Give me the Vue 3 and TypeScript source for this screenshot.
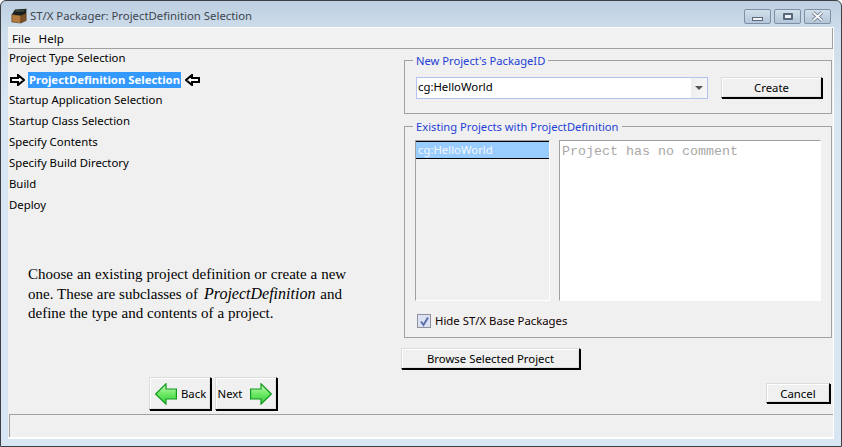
<script setup lang="ts">
const steps: { label: string; active?: boolean }[] = [
  { label: 'Project Type Selection' },
  { label: 'ProjectDefinition Selection', active: true },
  { label: 'Startup Application Selection' },
  { label: 'Startup Class Selection' },
  { label: 'Specify Contents' },
  { label: 'Specify Build Directory' },
  { label: 'Build' },
  { label: 'Deploy' },
]
</script>

<template>
  <div class="window">
    <header class="titlebar">
      <svg class="app-icon" width="16" height="16" viewBox="0 0 16 16">
        <path d="M.8 6.5 L10 7.5 L10 15 L.8 14 Z" fill="#b37a40" stroke="#5a3a18" stroke-width=".6" />
        <path d="M10 7.5 L15.2 5.5 L15.2 12.5 L10 15 Z" fill="#7d5026" stroke="#5a3a18" stroke-width=".6" />
        <path d="M.8 6.5 L4 1.5 L15.5 .8 L15.2 5.5 L10 7.5 Z" fill="#1d1f1c" />
        <path d="M4.5 2.2 L14 1.5 L13 3.5 L4 4 Z" fill="#3d4a40" />
      </svg>
      <span class="title">ST/X Packager: ProjectDefinition Selection</span>
      <div class="caption">
        <span class="cap cap-min"><i></i></span>
        <span class="cap cap-max"><i></i></span>
        <span class="cap cap-close">
          <svg width="13" height="11" viewBox="0 0 13 11"><path d="M2 1.5 L11 9.5 M11 1.5 L2 9.5" stroke="#59677a" stroke-width="3.4" /><path d="M2 1.5 L11 9.5 M11 1.5 L2 9.5" stroke="#f4f6f8" stroke-width="2" /></svg>
        </span>
      </div>
    </header>

    <div class="client">
      <nav class="menubar"><span>File</span><span>Help</span></nav>

      <main class="main">
        <section class="left">
          <ul class="steps">
            <li v-for="s in steps" :key="s.label" :class="{ active: s.active }">
              <template v-if="s.active">
                <svg class="marker" width="15" height="12" viewBox="0 0 15 12"><path d="M1 4 H8 V1 L14 6 L8 11 V8 H1 Z" fill="#fff" stroke="#000" stroke-width="2" /></svg>
                <span class="hl">{{ s.label }}</span>
                <svg class="marker" width="15" height="12" viewBox="0 0 15 12"><path d="M14 4 H7 V1 L1 6 L7 11 V8 H14 Z" fill="#fff" stroke="#000" stroke-width="2" /></svg>
              </template>
              <template v-else>{{ s.label }}</template>
            </li>
          </ul>
          <p class="desc">Choose an existing project definition or create a new one. These are subclasses of <em>ProjectDefinition</em> and define the type and contents of a project.</p>
        </section>

        <section class="right">
          <fieldset class="group group-new">
            <legend>New Project's PackageID</legend>
            <div class="row">
              <div class="combo"><span class="combo-text">cg:HelloWorld</span><span class="combo-btn"><b></b></span></div>
              <button class="btn btn-create">Create</button>
            </div>
          </fieldset>
          <fieldset class="group group-existing">
            <legend>Existing Projects with ProjectDefinition</legend>
            <div class="panes">
              <div class="list"><div class="list-sel">cg:HelloWorld</div></div>
              <div class="comment">Project has no comment</div>
            </div>
            <label class="check">
              <span class="box">
                <svg width="11" height="11" viewBox="0 0 11 11"><path d="M2 5.5 L4.5 9 L9 1.5" fill="none" stroke="#5a6fae" stroke-width="2" /></svg>
              </span>
              Hide ST/X Base Packages
            </label>
          </fieldset>
          <button class="btn btn-browse">Browse Selected Project</button>
        </section>

        <div class="nav-btns">
          <button class="btn btn-nav">
            <svg width="22" height="22" viewBox="0 0 22 22"><defs><linearGradient id="ga" x1="0" y1="0" x2="0" y2="1"><stop offset="0" stop-color="#d2f9c4" /><stop offset=".5" stop-color="#6ce864" /><stop offset="1" stop-color="#3ccc40" /></linearGradient></defs><path d="M.7 11 L11 .8 V6 H21.4 V16 H11 V21.2 Z" fill="url(#ga)" stroke="#119a1c" stroke-width="1.2" /></svg>
            <span>Back</span>
          </button>
          <button class="btn btn-nav btn-next">
            <span>Next</span>
            <svg width="22" height="22" viewBox="0 0 22 22"><defs><linearGradient id="gb" x1="0" y1="0" x2="0" y2="1"><stop offset="0" stop-color="#d2f9c4" /><stop offset=".5" stop-color="#6ce864" /><stop offset="1" stop-color="#3ccc40" /></linearGradient></defs><path d="M21.3 11 L11 .8 V6 H.6 V16 H11 V21.2 Z" fill="url(#gb)" stroke="#119a1c" stroke-width="1.2" /></svg>
          </button>
        </div>
        <div class="cancel-cell"><button class="btn btn-cancel">Cancel</button></div>
      </main>

      <footer class="status"></footer>
    </div>
  </div>
</template>

<style>
html, body { margin: 0; background: #fff; }
</style>

<style scoped>
.window {
  box-sizing: border-box;
  width: 842px;
  height: 447px;
  display: flex;
  flex-direction: column;
  padding: 0 7px 7px;
  background: linear-gradient(180deg, #bccfe0 0, #cfdeec 30px, #d8e5f2 100px);
  border: 1px solid #3c3f44;
  border-radius: 6px 6px 0 0;
  font-family: "Noto Sans", sans-serif;
  font-size: 11.35px;
  color: #000;
  overflow: hidden;
}
.titlebar {
  height: 26px;
  flex: none;
  display: flex;
  align-items: center;
  color: #3e4650;
  margin: 0 -7px;
  padding: 0 10px 0 10px;
}
.app-icon { margin-top: 4px; }
.title { margin: 2px 0 0 3px; }
.caption { margin-left: auto; margin-top: 5px; display: flex; gap: 3px; }
.cap {
  box-sizing: border-box;
  width: 27px;
  height: 15px;
  border: 1px solid #7f90a6;
  border-radius: 2px;
  background: linear-gradient(180deg, #d3e0ec, #b3c6d9);
  display: flex;
  align-items: center;
  justify-content: center;
}
.cap-min i { display: block; width: 9px; height: 2px; margin-top: 4px; background: #f2f4f6; border: 1px solid #59677a; box-sizing: content-box; }
.cap-max i { display: block; width: 6px; height: 3px; background: #eef2f6; border: 2px solid #59677a; border-radius: 1px; }
.client {
  flex: 1;
  min-height: 0;
  display: flex;
  flex-direction: column;
  background: #f0f0f0;
  border: solid #fff;
  border-width: 1px 1px 2px 0;
}
.menubar {
  height: 20px;
  flex: none;
  display: flex;
  gap: 8px;
  align-items: center;
  padding-left: 4px;
  font-size: 11.6px;
  border-bottom: 1px solid #a0a0a0;
  border-right: 1px solid #a0a0a0;
  background: #f2f2f2;
}
.main {
  flex: 1;
  min-height: 0;
  display: grid;
  grid-template-columns: 396px 1fr;
  grid-template-rows: 1fr 37px;
}
.left { min-width: 0; }
.steps { list-style: none; margin: -2px 0 0; padding: 0 0 0 1px; }
.steps li { height: 21px; line-height: 20px; white-space: nowrap; display: flex; align-items: center; }
.steps li.active { padding-top: 2px; box-sizing: border-box; margin-left: 1px; }
.hl { background: #3399ff; color: #fff; padding: 0 1px; line-height: 16px; margin: 0 4px 0 3px; font-weight: 700; }
.marker { flex: none; }
.desc {
  margin: 50px 0 0 20px;
  width: 325px;
  font-family: "Liberation Serif", serif;
  font-size: 15px;
  line-height: 19.5px;
  word-spacing: .2px;
}
.desc em { font-size: 16px; line-height: 1; margin: 0 1px 0 2px; }
.right { padding-right: 3px; display: flex; flex-direction: column; }
.group {
  box-sizing: border-box;
  margin: 0;
  min-width: 0;
  border: 1px solid #a0a0a0;
  padding: 0;
}
.group legend { margin-left: 8px; padding: 2px 3px 0; color: #1f3fd6; line-height: 14px; font-size: 11.2px; }
.group-new { height: 62px; margin-top: 3px; flex: none; }
.row { display: flex; align-items: flex-start; padding: 9px 0 0 11px; }
.combo {
  box-sizing: border-box;
  width: 292px;
  height: 22px;
  display: flex;
  background: #fff;
  border: 1px solid #b4c2ee;
}
.combo-text { flex: 1; line-height: 18px; padding-left: 1px; }
.combo-btn { width: 16px; background: linear-gradient(90deg, #eee, #f6f6f6); display: flex; align-items: center; justify-content: center; }
.combo-btn b { width: 0; height: 0; border: 4px solid transparent; border-top: 4px solid #555; border-bottom: 0; }
.btn {
  box-sizing: border-box;
  background: #f0f0f0;
  border: 1px solid;
  border-color: #dcdcdc #000 #000 #dcdcdc;
  box-shadow: inset 1px 1px 0 #fff, inset -1px -1px 0 #e0e0e0, 1px 1px 0 #000;
  font: inherit;
  color: #000;
  padding: 0;
}
.btn-create { width: 101px; height: 21px; margin-left: 13px; }
.group-existing { height: 220px; margin-top: 4px; flex: none; }
.panes { display: flex; gap: 9px; padding: 6px 10px 0 10px; }
.list {
  box-sizing: border-box;
  width: 135px;
  height: 161px;
  border: 1px solid;
  border-color: #a0a0a0 #fff #fff #a0a0a0;
}
.list-sel {
  box-sizing: border-box;
  height: 18px;
  line-height: 16px;
  padding-left: 2px;
  background: #99ccff;
  color: #f4f8ff;
  border: solid #000;
  border-width: 1px 0;
}
.comment {
  box-sizing: border-box;
  width: 262px;
  height: 161px;
  background: #fff;
  border: 1px solid;
  border-color: #a0a0a0 #fff #fff #a0a0a0;
  padding: 2px;
  font-family: "Liberation Mono", monospace;
  font-size: 13.33px;
  line-height: 18px;
  color: #a8a8a8;
}
.check { display: flex; align-items: center; gap: 4px; margin: 12px 0 0 12px; line-height: 16px; color: #100; }
.box {
  box-sizing: border-box;
  width: 14px;
  height: 14px;
  border: 1px solid #8f8f9f;
  background: #dde2f2;
  display: flex;
  align-items: center;
  justify-content: center;
}
.btn-browse { width: 179px; height: 21px; margin: 10px 0 0 -3px; flex: none; }
.nav-btns { display: flex; justify-content: flex-start; gap: 4px; padding-left: 141px; height: 33px; }
.btn-nav {
  width: 62px;
  height: 33px;
  display: flex;
  align-items: center;
  gap: 4px;
  padding: 0 0 0 5px;
  flex: none;
}
.btn-next { gap: 7px; padding: 0 0 0 1px; }
.btn-next span { width: 26px; }
.cancel-cell { display: flex; justify-content: flex-end; padding: 6px 5px 0 0; }
.btn-cancel { width: 64px; height: 20px; }
.status {
  flex: none;
  height: 23px;
  margin-left: 1px;
  box-sizing: border-box;
  border: solid #a0a0a0;
  border-width: 1px 0 0 1px;
}
</style>
